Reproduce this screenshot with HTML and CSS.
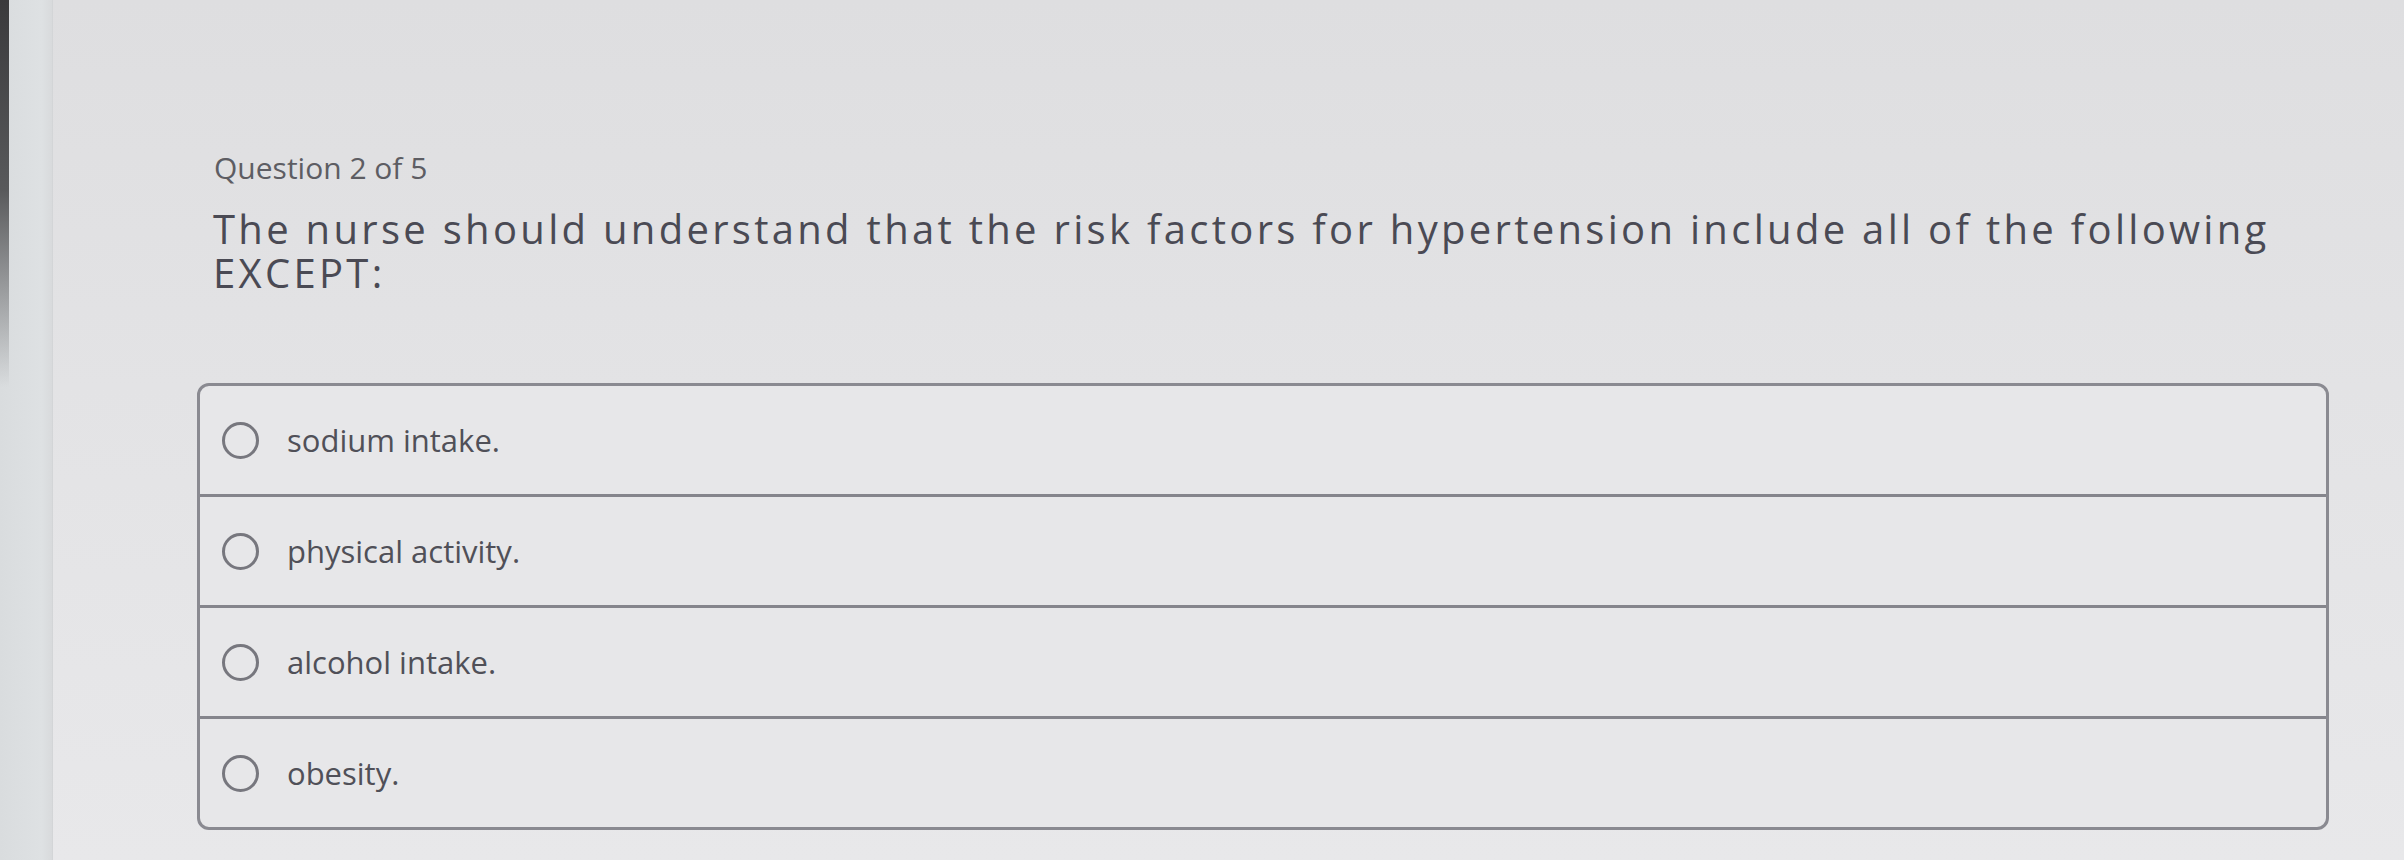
FILE: index.html
```html
<!DOCTYPE html>
<html lang="en">
<head>
<meta charset="utf-8">
<title>Question 2 of 5</title>
<link rel="stylesheet" href="styles.css">
</head>
<body>
<div class="screen">
  <div class="bezel"></div>
  <main class="page">
    <div class="counter">Question 2 of 5</div>
    <h1 class="prompt">The nurse should understand that the risk factors for hypertension include all of the following EXCEPT:</h1>
    <ul class="choices">
      <li class="choice"><span class="radio"></span><span class="label">sodium intake.</span></li>
      <li class="choice"><span class="radio"></span><span class="label">physical activity.</span></li>
      <li class="choice"><span class="radio"></span><span class="label">alcohol intake.</span></li>
      <li class="choice"><span class="radio"></span><span class="label">obesity.</span></li>
    </ul>
  </main>
</div>
</body>
</html>
```

FILE: styles.css
```css
html, body {
  margin: 0;
  padding: 0;
}

body {
  width: 2404px;
  height: 860px;
  overflow: hidden;
  font-family: "Open Sans", "Noto Sans", "Liberation Sans", sans-serif;
  background: #e4e4e6;
}

.screen {
  display: flex;
  height: 860px;
  background: linear-gradient(180deg, #dedee0 0%, #e3e3e5 45%, #e8e8ea 100%);
}

.bezel {
  width: 52px;
  flex: none;
  background:
    linear-gradient(180deg, #3a3a3c 0%, #58595b 22%, rgba(220,223,225,0) 45%) left top / 9px 100% no-repeat,
    linear-gradient(90deg, #d9dcde 0%, #dee1e3 80%, #d8dadc 100%);
  border-right: 1px solid #d3d5d7;
}

.page {
  flex: 1;
  padding: 148px 0 0 144px;
}

.counter {
  font-size: 30px;
  line-height: 40px;
  color: #5d5d63;
  margin-left: 17px;
}

.prompt {
  margin: 19px 0 0 16px;
  width: 2115px;
  font-weight: 400;
  font-size: 40px;
  line-height: 44px;
  letter-spacing: 3.3px;
  color: #4a4a54;
}

.choices {
  list-style: none;
  margin: 88px 0 0 0;
  padding: 0;
  width: 2126px;
  border: 3px solid #8a8a91;
  border-radius: 12px;
  background: #e7e7e9;
}

.choice {
  display: flex;
  align-items: center;
  height: 108px;
  padding-left: 22px;
}

.choice + .choice {
  border-top: 3px solid #85858c;
}

.radio {
  width: 31px;
  height: 31px;
  border: 3px solid #77777e;
  border-radius: 50%;
  flex: none;
}

.label {
  margin-left: 28px;
  font-size: 31px;
  line-height: 40px;
  color: #505058;
}
```
